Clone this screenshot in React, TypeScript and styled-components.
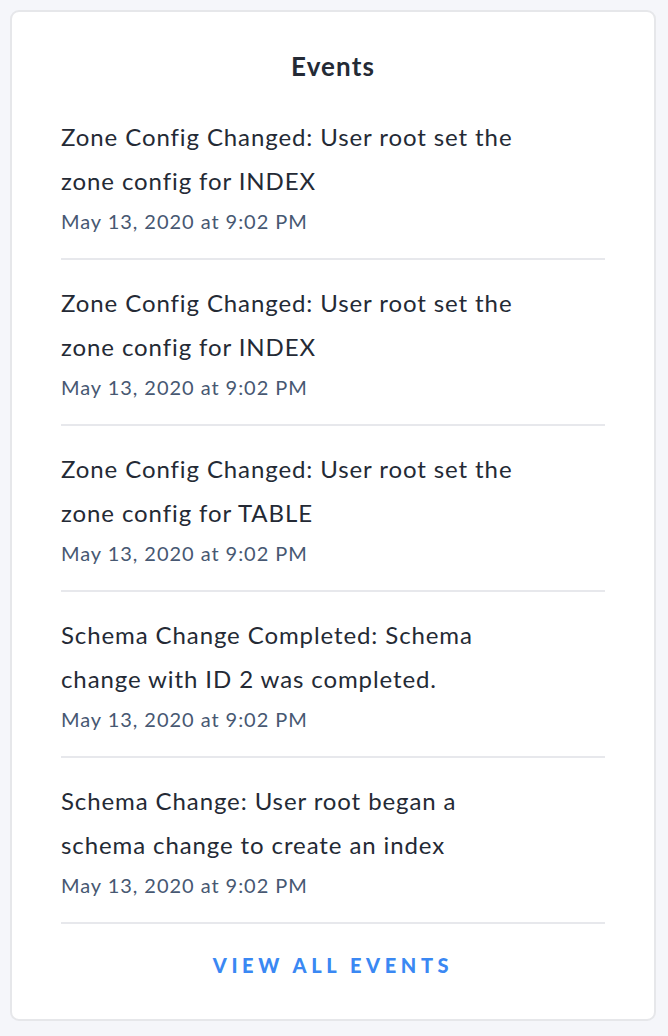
import React from "react";
import styled, { createGlobalStyle } from "styled-components";

const Global = createGlobalStyle`
  html, body { margin: 0; padding: 0; background: #f5f6fa; }
  body { font-family: Lato, "Open Sans", sans-serif; -webkit-font-smoothing: antialiased; }
  * { box-sizing: border-box; }
`;

const Page = styled.div`
  padding: 10px 12px 11px 10px;
`;

const Card = styled.section`
  background: #ffffff;
  border: 2px solid #e6e7ea;
  border-radius: 9px;
  padding: 0 49px;
  display: flex;
  flex-direction: column;
`;

const Title = styled.h2`
  margin: 0;
  padding: 39px 0 13px;
  text-align: center;
  font-size: 26px;
  line-height: 30px;
  font-weight: 700;
  letter-spacing: 1.1px;
  color: #242a35;
`;

const List = styled.ul`
  list-style: none;
  margin: 0;
  padding: 0;
`;

const Item = styled.li`
  padding: 21px 0 22px;
  border-bottom: 2px solid #e7e8ec;
`;

const Message = styled.div`
  font-size: 24px;
  line-height: 44px;
  letter-spacing: 0.9px;
  color: #242a35;
  max-width: 470px;
`;

const Time = styled.div`
  margin-top: 3px;
  font-size: 20px;
  line-height: 30px;
  color: #475872;
  letter-spacing: 0.95px;
`;

const Footer = styled.div`
  display: flex;
  justify-content: center;
  padding: 27px 0 40px;
`;

const ViewAll = styled.a`
  font-size: 20px;
  line-height: 28px;
  font-weight: 900;
  letter-spacing: 4.6px;
  color: #3a88f3;
  text-decoration: none;
  cursor: pointer;
`;

const events = [
  "Zone Config Changed: User root set the zone config for INDEX",
  "Zone Config Changed: User root set the zone config for INDEX",
  "Zone Config Changed: User root set the zone config for TABLE",
  "Schema Change Completed: Schema change with ID 2 was completed.",
  "Schema Change: User root began a schema change to create an index",
];

export default function App() {
  return (
    <>
      <Global />
      <Page>
        <Card>
          <Title>Events</Title>
          <List>
            {events.map((e, i) => (
              <Item key={i}>
                <Message>{e}</Message>
                <Time>May 13, 2020 at 9:02 PM</Time>
              </Item>
            ))}
          </List>
          <Footer>
            <ViewAll>VIEW ALL EVENTS</ViewAll>
          </Footer>
        </Card>
      </Page>
    </>
  );
}
